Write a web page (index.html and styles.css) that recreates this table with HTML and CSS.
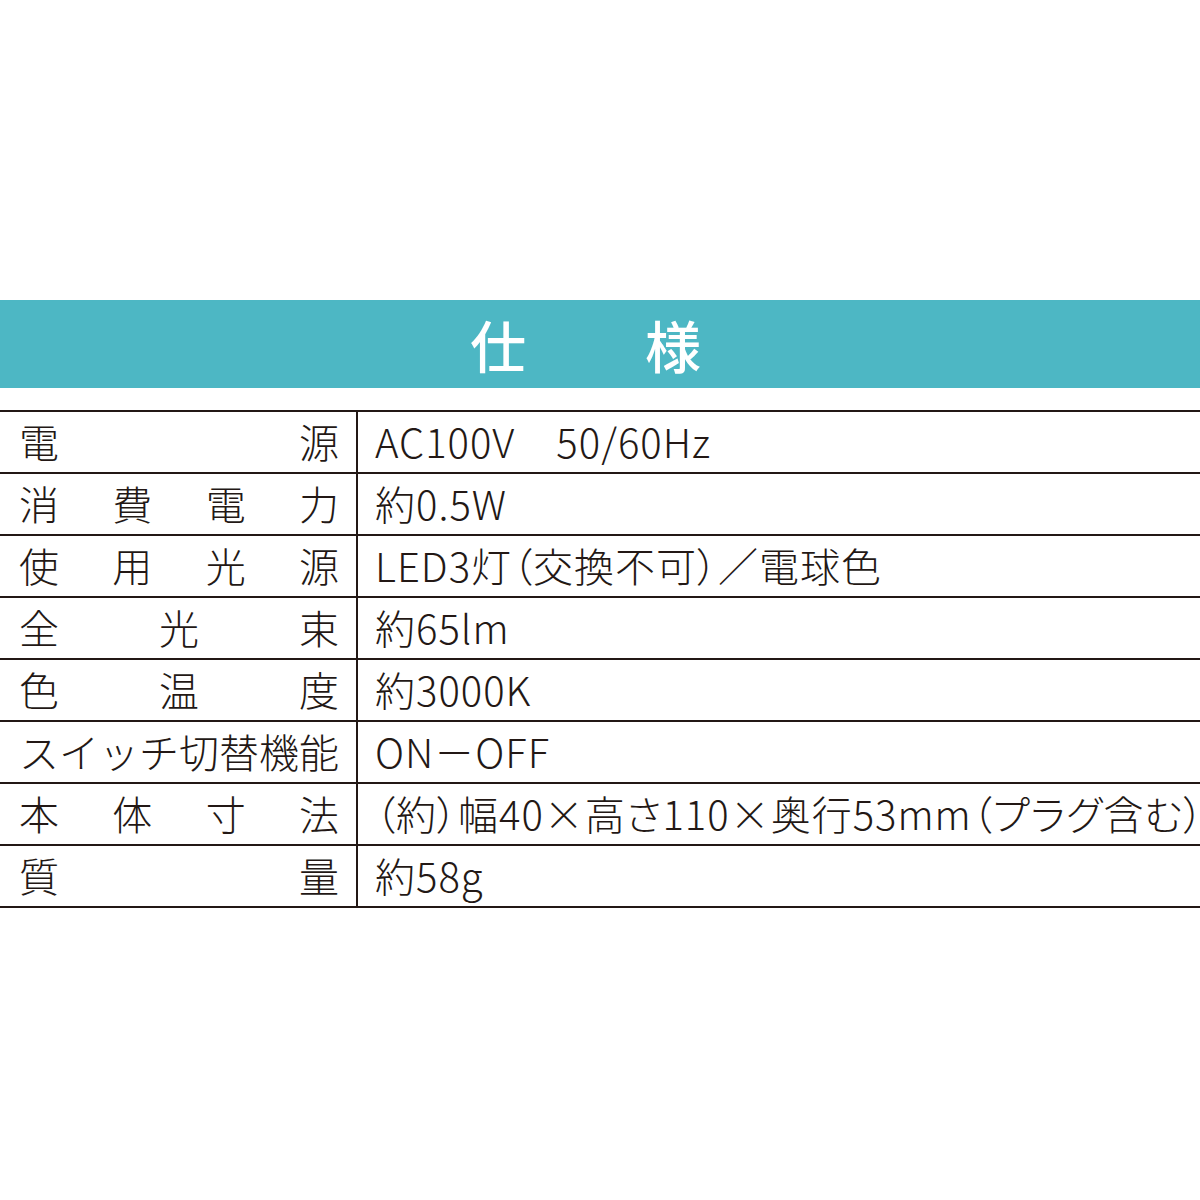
FILE: index.html
```html
<!DOCTYPE html>
<html lang="ja">
<head>
<meta charset="utf-8">
<link rel="stylesheet" href="styles.css">
</head>
<body>
<div class="page">
  <div class="title"><span>仕</span><span>様</span></div>
  <div class="spec">
    <div class="row"><div class="label"><span>電</span><span>源</span></div><div class="value">AC100V　50/60Hz</div></div>
    <div class="row"><div class="label"><span>消</span><span>費</span><span>電</span><span>力</span></div><div class="value">約0.5W</div></div>
    <div class="row"><div class="label"><span>使</span><span>用</span><span>光</span><span>源</span></div><div class="value">LED3灯（交換不可）／電球色</div></div>
    <div class="row"><div class="label"><span>全</span><span>光</span><span>束</span></div><div class="value">約65lm</div></div>
    <div class="row"><div class="label"><span>色</span><span>温</span><span>度</span></div><div class="value">約3000K</div></div>
    <div class="row"><div class="label"><span>ス</span><span>イ</span><span>ッ</span><span>チ</span><span>切</span><span>替</span><span>機</span><span>能</span></div><div class="value">ON－OFF</div></div>
    <div class="row"><div class="label"><span>本</span><span>体</span><span>寸</span><span>法</span></div><div class="value">（約）幅40×高さ110×奥行53mm（プラグ含む）</div></div>
    <div class="row"><div class="label"><span>質</span><span>量</span></div><div class="value">約58g</div></div>
  </div>
</div>
</body>
</html>
```
FILE: styles.css
```css
html, body {
  margin: 0;
  padding: 0;
  background: #ffffff;
}
body {
  width: 1200px;
  height: 1200px;
  overflow: hidden;
  font-family: "Noto Sans CJK JP", sans-serif;
  color: #231815;
}
.page {
  padding-top: 300px;
}
.title {
  height: 88px;
  background: #4db7c4;
  color: #ffffff;
  display: flex;
  justify-content: center;
  align-items: center;
  gap: 119px;
  padding-right: 29px;
  font-size: 56px;
  font-weight: 500;
  line-height: 1;
}
.spec {
  margin-top: 22px;
  border-top: 2px solid #231815;
}
.row {
  display: grid;
  grid-template-columns: 358px 1fr;
  height: 60px;
  border-bottom: 2px solid #231815;
}
.label {
  display: flex;
  justify-content: space-between;
  align-items: center;
  padding: 0 17px 3px 19px;
  border-right: 2px solid #231815;
  font-size: 40px;
  font-weight: 300;
  line-height: 1;
}
.value {
  display: flex;
  align-items: center;
  padding: 0 0 3px 17px;
  font-size: 40px;
  font-weight: 300;
  letter-spacing: 1px;
  line-height: 1;
  white-space: nowrap;
  font-feature-settings: "palt";
}
```
